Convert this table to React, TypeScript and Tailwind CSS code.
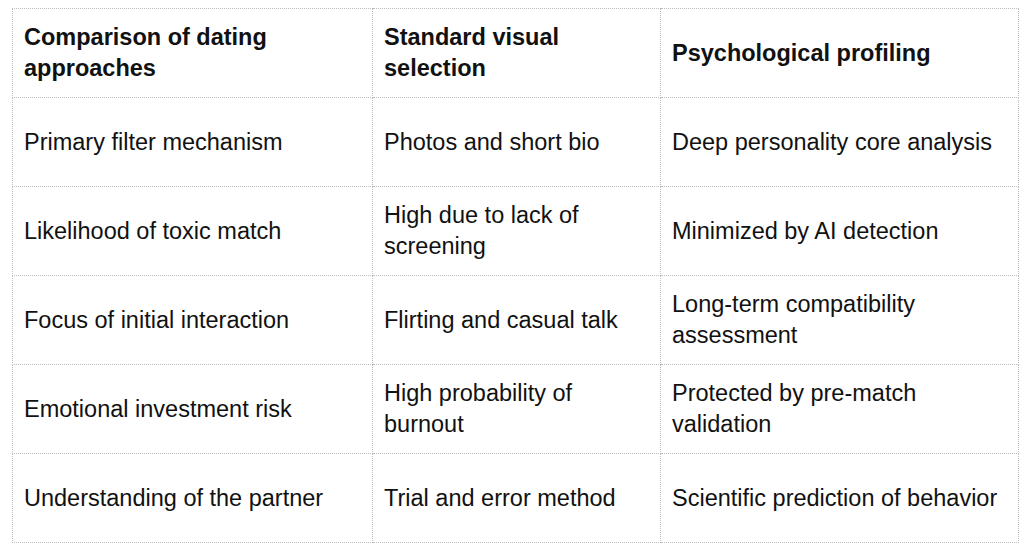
import React from 'react';

const rows: [string, string, string][] = [
  ['Primary filter mechanism', 'Photos and short bio', 'Deep personality core analysis'],
  ['Likelihood of toxic match', 'High due to lack of screening', 'Minimized by AI detection'],
  ['Focus of initial interaction', 'Flirting and casual talk', 'Long-term compatibility assessment'],
  ['Emotional investment risk', 'High probability of burnout', 'Protected by pre-match validation'],
  ['Understanding of the partner', 'Trial and error method', 'Scientific prediction of behavior'],
];

export default function App() {
  return (
    <div className="w-[1024px] h-[545px] bg-white pt-2 pl-3 font-['Liberation_Sans',Arial,sans-serif] text-[23.5px] leading-[31px] text-[#111]">
      <table className="border-collapse table-fixed w-[1006px]">
        <colgroup>
          <col className="w-[360px]" />
          <col className="w-[288px]" />
          <col className="w-[358px]" />
        </colgroup>
        <thead>
          <tr className="h-[89px]">
            <th className="border border-dotted border-[#bdbdbd] px-[11px] text-left align-middle font-bold">Comparison of dating approaches</th>
            <th className="border border-dotted border-[#bdbdbd] px-[11px] text-left align-middle font-bold">Standard visual selection</th>
            <th className="border border-dotted border-[#bdbdbd] px-[11px] text-left align-middle font-bold">Psychological profiling</th>
          </tr>
        </thead>
        <tbody>
          {rows.map((r, i) => (
            <tr key={i} className="h-[89px]">
              {r.map((c, j) => (
                <td key={j} className="border border-dotted border-[#bdbdbd] px-[11px] align-middle">{c}</td>
              ))}
            </tr>
          ))}
        </tbody>
      </table>
    </div>
  );
}
